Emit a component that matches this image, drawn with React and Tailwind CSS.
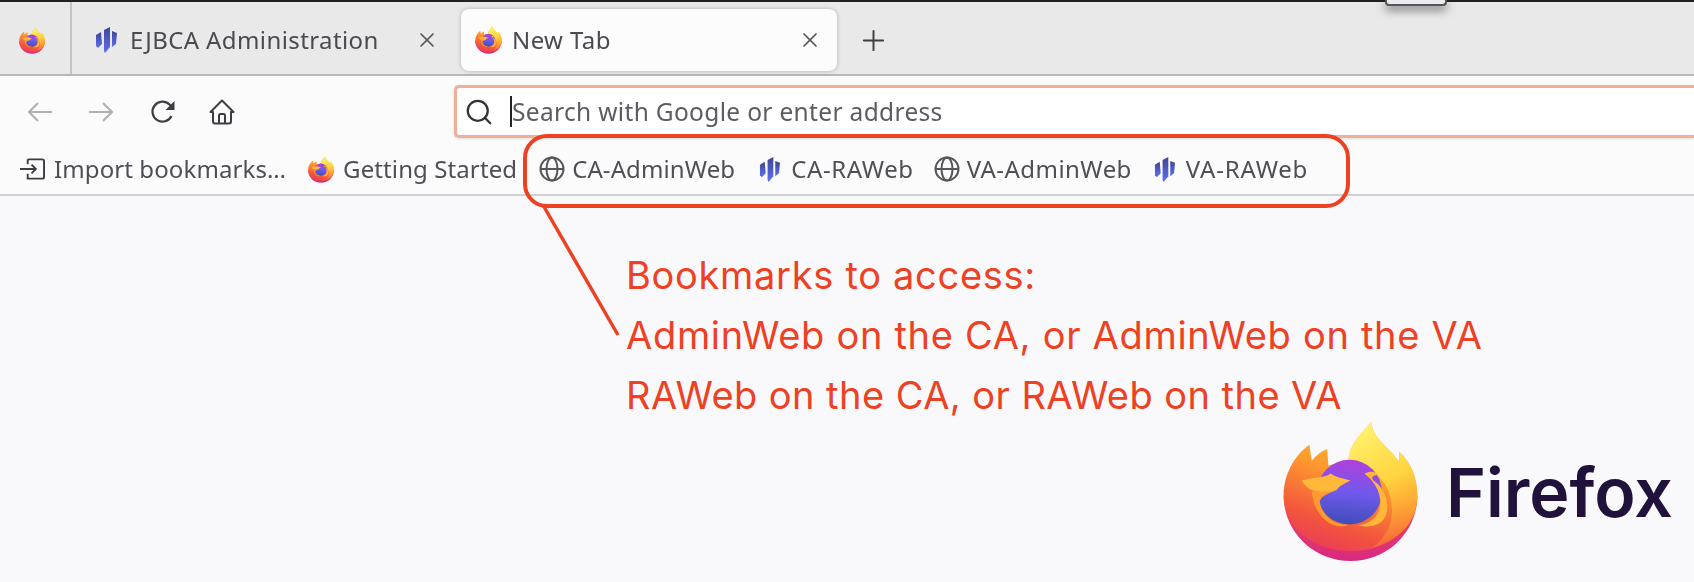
import { Plus, Search, X } from "lucide-react";

const FirefoxLogo = ({ className }) => (
  <svg viewBox="36 10 404 420" className={className}>
    <defs>
      <linearGradient id="ffBody" x1="0.7" y1="0.05" x2="0.35" y2="1">
        <stop offset="0" stopColor="#ffbd2e" />
        <stop offset="0.4" stopColor="#ff9a2e" />
        <stop offset="0.8" stopColor="#f2553d" />
        <stop offset="1" stopColor="#ea3f55" />
      </linearGradient>
      <linearGradient id="ffBase" x1="0.5" y1="0" x2="0.5" y2="1">
        <stop offset="0" stopColor="#f04a5c" />
        <stop offset="1" stopColor="#d9297f" />
      </linearGradient>
      <linearGradient id="ffFlame" x1="0.3" y1="0" x2="0.6" y2="1">
        <stop offset="0" stopColor="#fff36e" />
        <stop offset="0.5" stopColor="#ffd440" />
        <stop offset="1" stopColor="#ff9a33" stopOpacity="0.2" />
      </linearGradient>
      <linearGradient id="ffGlobe" x1="0.55" y1="0" x2="0.45" y2="1">
        <stop offset="0" stopColor="#b23fdc" />
        <stop offset="0.5" stopColor="#7059ec" />
        <stop offset="1" stopColor="#3f4db8" />
      </linearGradient>
    </defs>
    <path d="M38 232C38 340 126 428 238 428C350 428 438 340 438 232Z" fill="url(#ffBase)" />
    <path
      d="M115 80L122 128C135 112 150 100 168 93L172 142L232 128C236 70 278 42 300 12C304 62 352 84 384 132L383 100C420 134 438 180 438 232C438 330 350 398 240 398C128 398 38 330 38 232C38 168 70 112 115 80Z"
      fill="url(#ffBody)"
    />
    <path
      d="M232 128C236 70 278 42 300 12C304 62 352 84 384 132L383 100C420 134 438 180 438 232C438 310 388 362 300 390C372 340 370 270 350 215C330 170 280 130 232 128Z"
      fill="url(#ffFlame)"
    />
    <circle cx="235" cy="222" r="97" fill="url(#ffGlobe)" />
    <path
      d="M196 216C172 226 150 232 146 250C152 292 190 322 235 319C190 340 130 300 122 220Z"
      fill="#ff9a30"
    />
    <path
      d="M92 187C125 176 158 182 178 166C195 178 215 180 238 187C222 196 208 200 196 216C170 222 135 222 118 214C108 208 98 198 92 187Z"
      fill="#ffb83a"
    />
    <path
      d="M280 167C296 158 312 160 322 170C306 172 298 176 306 186C336 206 358 250 344 292C332 320 300 330 260 322C346 310 346 216 280 167Z"
      fill="#ffb63b"
    />
  </svg>
);

const EjbcaIcon = ({ className }) => (
  <svg viewBox="0 0 22 26" className={className}>
    <defs>
      <linearGradient id="ejBar" x1="0" y1="0" x2="0" y2="1">
        <stop offset="0" stopColor="#3f4596" />
        <stop offset="1" stopColor="#5f6ff0" />
      </linearGradient>
    </defs>
    <path d="M1 8L6 5L7 17L3 21L1 19Z" fill="url(#ejBar)" />
    <path d="M9 3L15 0L15 20L10 26L9 24Z" fill="url(#ejBar)" />
    <path d="M17 4L22 6L21 17L17 20Z" fill="url(#ejBar)" />
  </svg>
);

const GlobeIcon = () => (
  <svg viewBox="0 0 26 26" fill="none" stroke="#55555a" strokeWidth="2" className="w-[26px] h-[26px] shrink-0">
    <circle cx="13" cy="13" r="11.5" />
    <ellipse cx="13" cy="13" rx="5.5" ry="11.5" />
    <path d="M1.5 13H24.5" />
  </svg>
);

const BackArrow = () => (
  <svg viewBox="0 0 24 20" fill="none" stroke="#b0b0b4" strokeWidth="2" className="w-[24px] h-[20px]">
    <path d="M1 10H24M10 1L1 10L10 19" />
  </svg>
);

const ForwardArrow = () => (
  <svg viewBox="0 0 24 20" fill="none" stroke="#b0b0b4" strokeWidth="2" className="w-[24px] h-[20px]">
    <path d="M0 10H23M14 1L23 10L14 19" />
  </svg>
);

const ReloadIcon = () => (
  <svg viewBox="0 0 26 26" fill="none" className="w-[26px] h-[26px]">
    <path d="M21.5 17A10 10 0 1 1 19.5 5.5L22 8" stroke="#3d3d42" strokeWidth="2.2" />
    <path d="M24.5 2V11H15.5Z" fill="#3d3d42" />
  </svg>
);

const HomeIcon = () => (
  <svg viewBox="0 0 26 26" fill="none" stroke="#3d3d42" strokeWidth="2" strokeLinejoin="round" className="w-[26px] h-[26px]">
    <path d="M1.5 13L13 1.5L24.5 13H22V22.5A2 2 0 0 1 20 24.5H6A2 2 0 0 1 4 22.5V13Z" />
    <path d="M10 24.5V16.5A1.5 1.5 0 0 1 11.5 15H14.5A1.5 1.5 0 0 1 16 16.5V24.5" />
  </svg>
);

const ImportIcon = () => (
  <svg viewBox="0 0 26 22" fill="none" stroke="#3d3d42" strokeWidth="2" className="w-[25px] h-[22px] shrink-0">
    <path d="M8 1H23A2 2 0 0 1 25 3V19A2 2 0 0 1 23 21H8V16" />
    <path d="M8 1V6" />
    <path d="M0 11H16M12 6.5L16.5 11L12 15.5" />
  </svg>
);

const Bookmark = ({ icon, label, className, textClass }) => (
  <div className={`flex items-center shrink-0 ${className}`}>
    {icon}
    <span className={`text-[#4e4e55] text-[24px] whitespace-nowrap ${textClass}`}>{label}</span>
  </div>
);

export default function App() {
  return (
    <div className="relative flex flex-col w-[1694px] h-[582px] overflow-hidden bg-[#f9f9fb] font-['Noto_Sans',sans-serif]">
      <div className="flex flex-col blur-[0.5px]">
        <div className="h-[2px] bg-[#222222]" />

        {/* tab strip */}
        <div className="flex items-center h-[74px] bg-[#e9e9e9] border-b-2 border-[#b8b8b8]">
          <div className="flex items-center justify-center w-[72px] h-full pr-[6px] pt-[4px] border-r-2 border-[#c4c4c4] shrink-0">
            <FirefoxLogo className="w-[26px] h-[27px]" />
          </div>
          <div className="flex items-center w-[389px] h-full pl-[23px] pt-[4px] shrink-0">
            <EjbcaIcon className="w-[22px] h-[26px]" />
            <span className="ml-[13px] text-[#4a4a50] text-[24px] tracking-[0.4px] whitespace-nowrap">EJBCA Administration</span>
            <X className="ml-auto mr-[22px] w-[24px] h-[24px] text-[#55555a]" strokeWidth={1.7} />
          </div>
          <div className="flex items-center w-[376px] h-[62px] mt-[4px] pl-[14px] bg-[#fcfcfc] rounded-[8px] shadow-[0_0_4px_rgba(0,0,0,0.25)] shrink-0">
            <FirefoxLogo className="w-[27px] h-[28px]" />
            <span className="ml-[10px] text-[#4a4a50] text-[24px] tracking-[0.4px] whitespace-nowrap">New Tab</span>
            <X className="ml-auto mr-[15px] w-[24px] h-[24px] text-[#55555a]" strokeWidth={1.7} />
          </div>
          <Plus className="ml-[20px] mt-[4px] w-[33px] h-[33px] text-[#3d3d42]" strokeWidth={1.4} />
        </div>

        {/* nav bar */}
        <div className="flex items-center h-[71px] bg-[#fbfbfc] shrink-0">
          <div className="ml-[28px]"><BackArrow /></div>
          <div className="ml-[37px]"><ForwardArrow /></div>
          <div className="ml-[37px]"><ReloadIcon /></div>
          <div className="ml-[33px]"><HomeIcon /></div>
          <div className="flex items-center ml-[219px] h-[53px] flex-1 bg-white border-[3px] border-r-0 border-[#efb09a] rounded-l-[5px] pl-[7px] shadow-[0_1px_3px_rgba(0,0,0,0.12)]">
            <Search className="w-[30px] h-[30px] text-[#333338]" strokeWidth={1.8} />
            <div className="ml-[16px] w-[2px] h-[31px] bg-[#222222]" />
            <span className="pt-[2px] text-[#5c5c63] text-[24.5px] tracking-[0.33px] whitespace-nowrap">Search with Google or enter address</span>
          </div>
        </div>

        {/* bookmarks bar */}
        <div className="flex items-center h-[49px] pl-[20px] pb-[3px] bg-[#fbfbfc] border-b-2 border-[#d0d0d0] shrink-0">
          <Bookmark icon={<ImportIcon />} label="Import bookmarks…" textClass="ml-[9px] tracking-[0.1px]" />
          <Bookmark icon={<FirefoxLogo className="w-[26px] h-[27px] shrink-0" />} label="Getting Started" className="ml-[22px]" textClass="ml-[9px] tracking-[0.1px]" />
          <Bookmark icon={<GlobeIcon />} label="CA-AdminWeb" className="ml-[22px]" textClass="ml-[7px] tracking-[0.1px]" />
          <Bookmark icon={<EjbcaIcon className="w-[21px] h-[25px] shrink-0" />} label="CA-RAWeb" className="ml-[24px]" textClass="ml-[11px] tracking-[0.6px]" />
          <Bookmark icon={<GlobeIcon />} label="VA-AdminWeb" className="ml-[20px]" textClass="ml-[7px] tracking-[0.45px]" />
          <Bookmark icon={<EjbcaIcon className="w-[21px] h-[25px] shrink-0" />} label="VA-RAWeb" className="ml-[22px]" textClass="ml-[11px] tracking-[0.8px]" />
        </div>
      </div>

      {/* page content */}
      <div className="flex flex-col flex-1 pl-[626px] pt-[49px]">
        <div className="text-[#ee4023] text-[38px] tracking-[0.7px] leading-[60px] font-['Inter',sans-serif] whitespace-nowrap">
          <div>Bookmarks to access:</div>
          <div>AdminWeb on the CA, or AdminWeb on the VA</div>
          <div className="tracking-[0.45px]">RAWeb on the CA, or RAWeb on the VA</div>
        </div>
        <div className="flex items-center justify-end -mt-[4px] pr-[21px] blur-[0.5px]">
          <FirefoxLogo className="w-[135px] h-[141px]" />
          <span className="ml-[28px] text-[#20123a] text-[68px] leading-none font-semibold font-['Inter',sans-serif]">Firefox</span>
        </div>
      </div>

      {/* annotation callout */}
      <div className="absolute left-[523px] top-[134px] w-[827px] h-[74px] border-[4px] border-[#ee4023] rounded-[24px]" />
      <svg className="absolute left-[535px] top-[200px] w-[90px] h-[140px]" viewBox="0 0 90 140">
        <path d="M8 5L83 135" stroke="#ee4023" strokeWidth="3.5" fill="none" />
      </svg>

      {/* window edge poking in from above */}
      <div className="absolute left-[1385px] top-0 w-[62px] h-[6px] bg-[#e9ebf0] border-x-2 border-b-2 border-[#555555] rounded-b-[4px] shadow-[0_4px_10px_rgba(0,0,0,0.55)]" />
    </div>
  );
}
